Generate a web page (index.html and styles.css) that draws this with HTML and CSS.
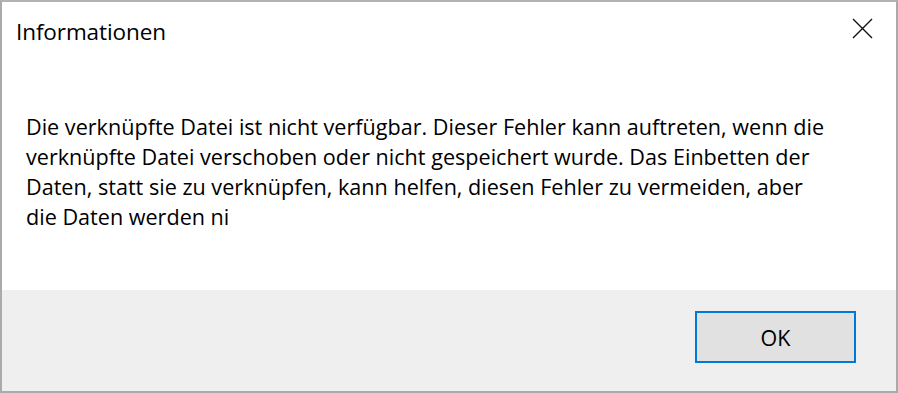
FILE: index.html
```html
<!DOCTYPE html>
<html lang="de">
<head>
<meta charset="utf-8">
<title>Informationen</title>
<link rel="stylesheet" href="styles.css">
</head>
<body>
<div class="dialog">
  <div class="content">
    <div class="titlebar">
      <span class="title">Informationen</span>
      <span class="close" aria-label="Schließen">
        <svg width="21" height="21" viewBox="0 0 21 21"><path d="M1 1 L20 20 M20 1 L1 20" stroke="#111" stroke-width="1.4" fill="none"/></svg>
      </span>
    </div>
    <p class="message">Die verknüpfte Datei ist nicht verfügbar. Dieser Fehler kann auftreten, wenn die<br>verknüpfte Datei verschoben oder nicht gespeichert wurde. Das Einbetten der<br>Daten, statt sie zu verknüpfen, kann helfen, diesen Fehler zu vermeiden, aber<br>die Daten werden ni</p>
  </div>
  <div class="footer">
    <button class="ok">OK</button>
  </div>
</div>
</body>
</html>
```
FILE: styles.css
```css
* { box-sizing: border-box; }
html, body { margin: 0; padding: 0; }
body {
  width: 898px;
  height: 393px;
  overflow: hidden;
  font-family: "Open Sans", "Noto Sans", sans-serif;
  color: #000;
  background: #aaaaaa;
}
.dialog {
  width: 898px;
  height: 393px;
  border-top: 2px solid #b2b2b2;
  border-left: 2px solid #aaaaaa;
  border-right: 2px solid #aaaaaa;
  border-bottom: 2px solid #aaaaaa;
  display: flex;
  flex-direction: column;
}
.content {
  background: #fff;
  height: 288px;
}
.titlebar {
  display: flex;
  justify-content: space-between;
  align-items: flex-start;
  padding: 16px 23px 0 14px;
  height: 60px;
}
.title {
  font-size: 22.5px;
  line-height: 28px;
  letter-spacing: -0.1px;
}
.close {
  display: flex;
  margin-top: 0;
}
.message {
  margin: 50px 0 0 24px;
  font-size: 21.6px;
  line-height: 30px;
  white-space: nowrap;
}
.footer {
  flex: 1;
  background: #efefef;
  display: flex;
  justify-content: flex-end;
  align-items: flex-start;
  padding: 21px 40px 0 0;
}
.ok {
  width: 161px;
  height: 52px;
  border: 2px solid #0078d7;
  background: #e1e1e1;
  font-family: inherit;
  font-size: 21.5px;
  color: #000;
  padding: 0;
}
```
